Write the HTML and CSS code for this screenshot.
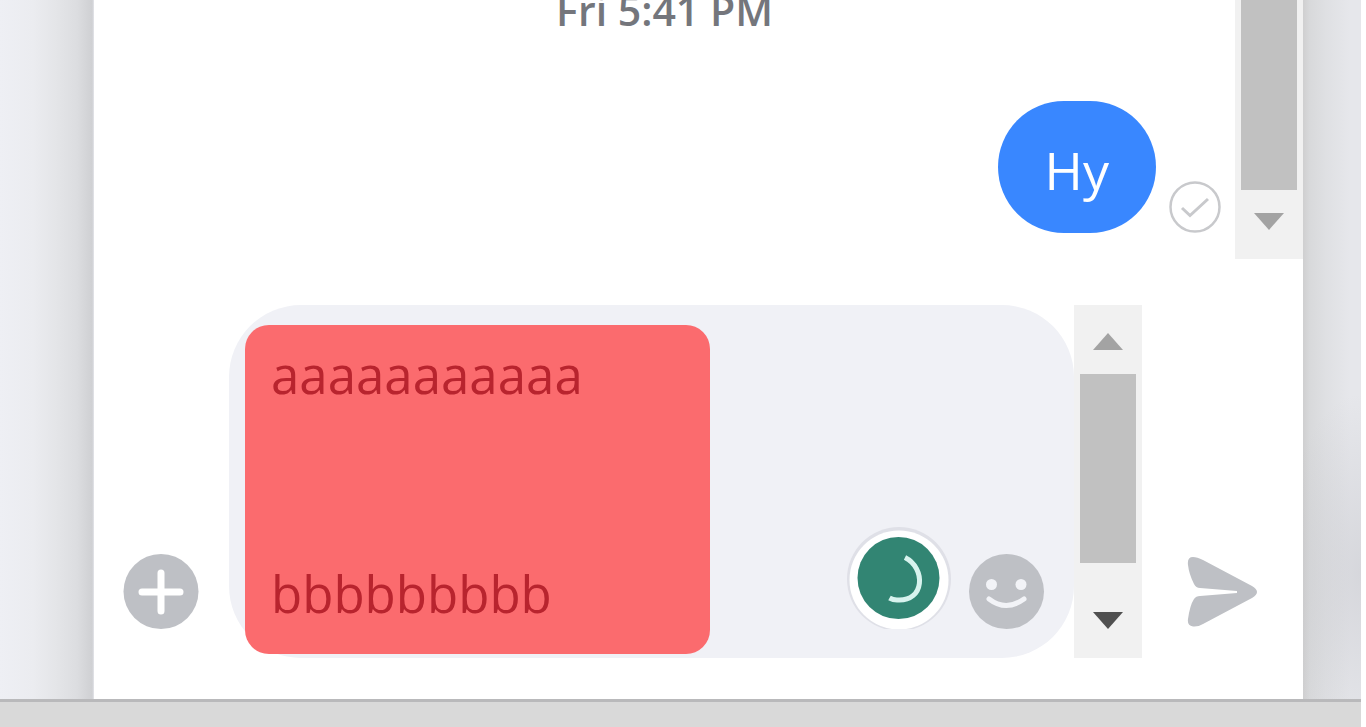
FILE: index.html
```html
<!DOCTYPE html>
<html lang="en">
<head>
    <meta charset="UTF-8">
    <meta name="viewport" content="width=device-width, initial-scale=1.0">
    <title>Chat</title>
    <link rel="stylesheet" href="styles.css">
</head>
<body>

    <div class="page">
        <div class="gutter gutter-left"></div>

        <main class="chat">
            <section class="messages">
                <div class="message-list">
                    <time class="message-date">Fri 5:41 PM</time>
                    <div class="message-row">
                        <p class="bubble">Hy</p>
                        <svg class="sent-icon" viewBox="0 0 52 52" role="img" aria-label="Sent">
                            <circle cx="26" cy="26" r="24.5" fill="none" stroke="#c8c9cc" stroke-width="2.5"/>
                            <path d="M13 27L21 34.500L39 18" fill="none" stroke="#c8c9cc" stroke-width="3"/>
                        </svg>
                    </div>
                </div>
                <div class="scrollbar">
                    <div class="scroll-thumb"></div>
                    <button class="scroll-btn" aria-label="Scroll messages down">
                        <svg viewBox="0 0 30 17"><path d="M0 0H30L15 17Z"/></svg>
                    </button>
                </div>
            </section>

            <form class="composer">
                <button type="button" class="icon-btn" aria-label="Add">
                    <svg viewBox="0 0 76 76">
                        <circle cx="38" cy="38.500" r="37.500" fill="#bec0c5"/>
                        <path d="M38 20V58M19 39H57" stroke="#fff" stroke-width="7" stroke-linecap="round"/>
                    </svg>
                </button>

                <div class="input-box">
                    <div class="highlight"></div>
                    <textarea class="message-input" aria-label="Message" spellcheck="false">aaaaaaaaaaa


bbbbbbbbb</textarea>
                    <div class="input-icons">
                        <svg class="checker" viewBox="0 0 106 104" role="img" aria-label="Checking text">
                            <circle cx="52" cy="54" r="52" fill="#dfe0e7"/>
                            <circle cx="52" cy="55" r="49.500" fill="#fff"/>
                            <circle cx="51.500" cy="53" r="41" fill="#328573"/>
                            <path d="M58 32.500C79 43 78 77 50 75Q46 75 42.500 73" fill="none" stroke="#d8f3ee" stroke-width="5"/>
                        </svg>
                        <button type="button" class="icon-btn" aria-label="Choose an emoji">
                            <svg viewBox="0 0 76 76">
                                <circle cx="37.500" cy="38.500" r="37.500" fill="#bec0c5"/>
                                <circle cx="22.500" cy="31.500" r="5.500" fill="#f2f3f7"/>
                                <circle cx="52" cy="31.500" r="5.500" fill="#f2f3f7"/>
                                <path d="M20 46Q37 59 55 46" fill="none" stroke="#f2f3f7" stroke-width="5" stroke-linecap="round"/>
                            </svg>
                        </button>
                    </div>
                </div>

                <div class="scrollbar">
                    <button type="button" class="scroll-btn" aria-label="Scroll up">
                        <svg viewBox="0 0 30 17"><path d="M0 17H30L15 0Z"/></svg>
                    </button>
                    <div class="scroll-thumb"></div>
                    <div class="scroll-space"></div>
                    <button type="button" class="scroll-btn active" aria-label="Scroll down">
                        <svg viewBox="0 0 30 17"><path d="M0 0H30L15 17Z"/></svg>
                    </button>
                </div>

                <button class="icon-btn send-btn" aria-label="Send">
                    <svg viewBox="0 0 76 76">
                        <path d="M3 12Q2 4 8 4Q12 4 18 7L67 33Q77 39 67 45L18 71Q13 74 8 73.500Q2 73 3 66Q5 52 9 46Q11 43 15 43L52 40V38L15 35Q11 35 9 31Q4 21 3 12Z" fill="#bec0c5"/>
                    </svg>
                </button>
            </form>
        </main>

        <div class="gutter gutter-right"></div>
    </div>

    <footer class="bottom-bar"></footer>

</body>
</html>
```
FILE: styles.css
```css
* {
    box-sizing: border-box;
}

body {
    margin: 0;
    padding-right: 5px;
    min-height: 100vh;
    display: flex;
    flex-direction: column;
    background-color: #fff;
    font-family: "Open Sans", "Noto Sans", sans-serif;
}

button {
    padding: 0;
    border: none;
    background: none;
    cursor: pointer;
}

svg {
    display: block;
}

.page {
    display: flex;
}

/* Shadows on both sides of the chat window */
.gutter-left {
    width: 94px;
    background: linear-gradient(to right, #eeeff4 0%, #ebecf0 35%, #e4e5e8 60%, #dcdde0 82%, #cfd0d3 98%, #e4e5ea 100%);
}

.gutter-right {
    width: 58px;
    background:
        radial-gradient(ellipse 80px 180px at 100% 82%, rgba(150, 150, 158, 0.2), transparent),
        linear-gradient(to right, #cfcfd0 0%, #d8d9db 12%, #dfe0e3 40%, #e6e7eb 80%);
}

.chat {
    flex: 1;
    min-width: 0;
}

/* Messages */
.messages {
    display: flex;
    height: 259px;
    overflow: hidden;
}

.message-list {
    flex: 1;
    display: flex;
    flex-direction: column;
    justify-content: flex-end;
    gap: 63px;
    padding: 0 14px 26px;
}

.message-date {
    color: #74767c;
    font-size: 41px;
    font-weight: 600;
    line-height: 56px;
    text-align: center;
}

.message-row {
    display: flex;
    justify-content: flex-end;
    align-items: flex-end;
    gap: 13px;
}

.bubble {
    margin: 0;
    padding: 34px 47px 28px;
    border-radius: 66px;
    background-color: #3987ff;
    color: #fff;
    font-size: 52px;
    line-height: 70px;
}

.sent-icon {
    width: 52px;
    height: 52px;
}

/* Scrollbars */
.scrollbar {
    width: 68px;
    display: flex;
    flex-direction: column;
    background-color: #f1f1f1;
}

.scroll-thumb {
    flex: 1;
    margin: 0 6px;
    background-color: #c1c1c1;
}

.scroll-space {
    height: 26px;
}

.scroll-btn {
    height: 69px;
    padding-top: 4px;
    display: flex;
    justify-content: center;
    align-items: center;
    flex-shrink: 0;
}

.scroll-btn svg {
    width: 30px;
    height: 17px;
    fill: #a3a3a3;
}

.messages .scroll-btn {
    padding: 0 0 6px;
}

.scroll-btn.active svg {
    fill: #505050;
}

.scroll-btn.active {
    padding: 0 0 6px;
}

/* Composer */
.composer {
    display: flex;
    padding: 46px 42px 41px 29px;
}

.icon-btn {
    align-self: flex-end;
    width: 76px;
    height: 76px;
    flex-shrink: 0;
}

.composer > .icon-btn {
    margin-bottom: 29px;
}

.input-box {
    position: relative;
    flex: 1;
    height: 353px;
    margin-left: 30px;
    border-radius: 72px;
    background-color: #f0f1f6;
}

.highlight {
    position: absolute;
    top: 20px;
    left: 16px;
    width: 465px;
    height: 329px;
    border-radius: 24px;
    background-color: #fb6b6e;
}

.message-input {
    position: relative;
    display: block;
    width: 100%;
    height: 100%;
    padding: 33px 42px 0;
    border: none;
    outline: none;
    resize: none;
    overflow: hidden;
    background: transparent;
    color: #b8242e;
    font-family: inherit;
    font-size: 51px;
    line-height: 73px;
}

.input-icons {
    position: absolute;
    right: 29px;
    bottom: 29px;
    display: flex;
    align-items: flex-end;
    gap: 16px;
}

.checker {
    width: 106px;
    height: 104px;
}

.send-btn {
    margin-left: 43px;
}

.bottom-bar {
    flex: 1;
    min-height: 28px;
    border-top: 3px solid #b9b9bb;
    background-color: #d9d9d9;
}
```
